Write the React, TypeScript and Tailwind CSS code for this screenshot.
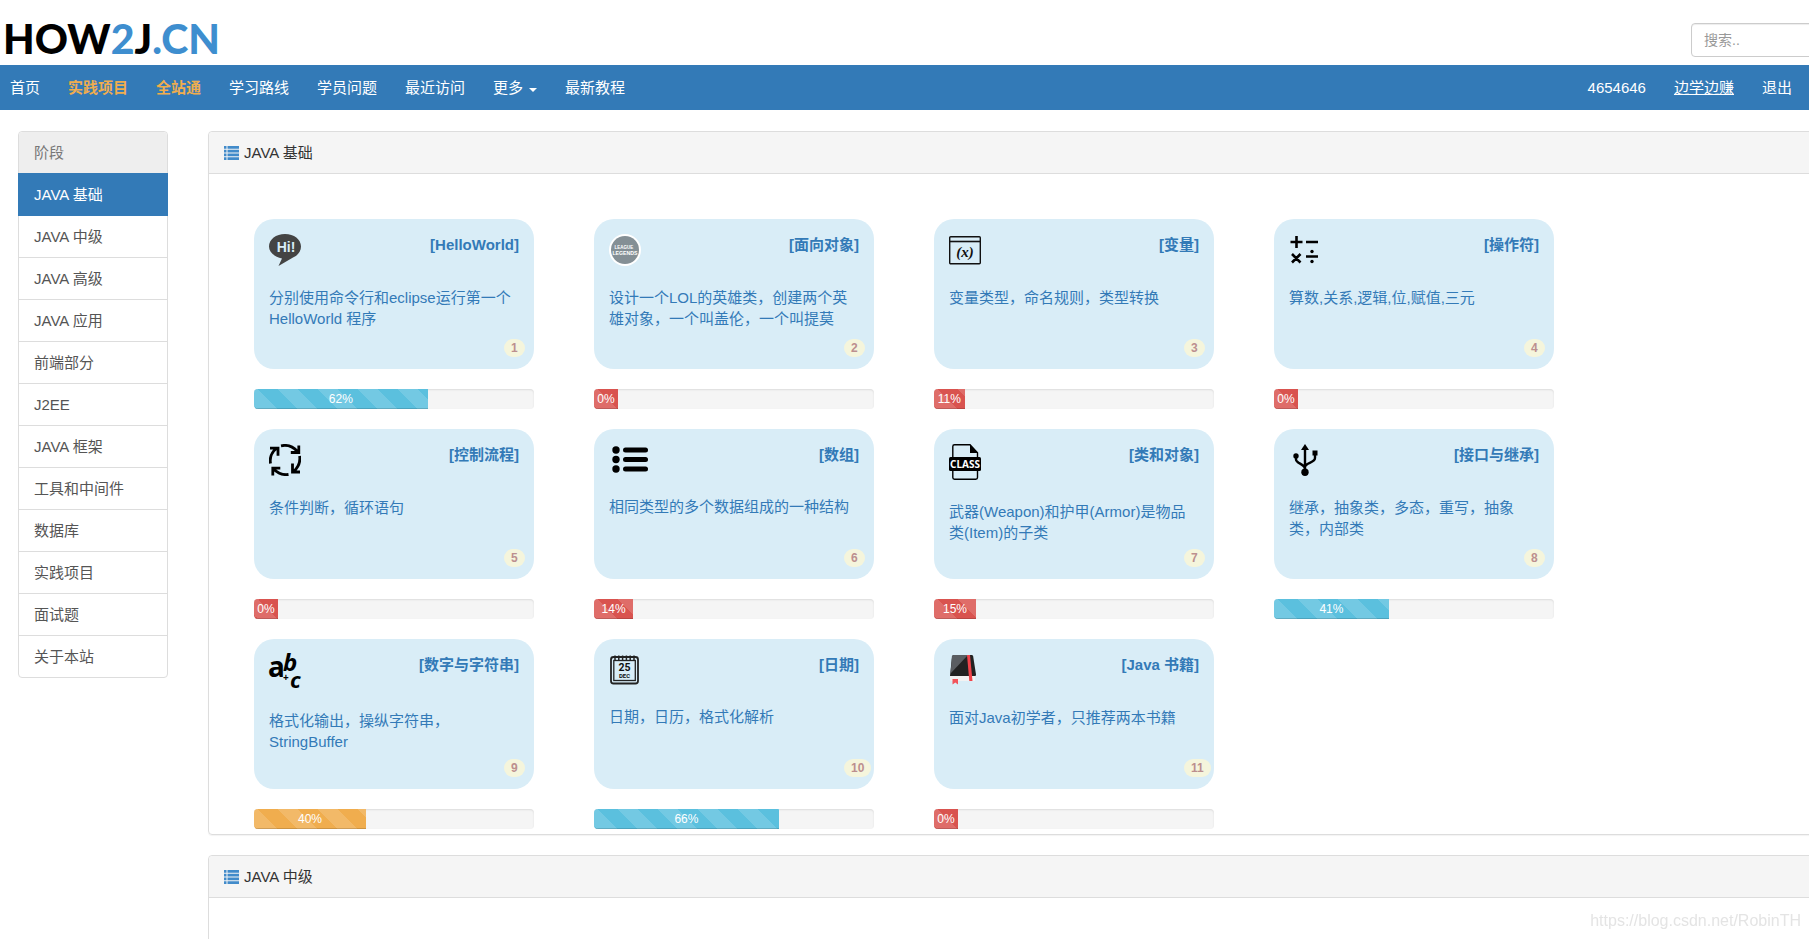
import React, { FormEvent, useState } from "react";

const IconHello = () => (
  <svg width="32" height="32" viewBox="0 0 32 32">
    <path d="M16 0C7 0 0 5.300 0 12.500c0 5.300 5 10.300 13 12L9.500 32 24 23.500c5-2 8-6.200 8-11C32 5.300 25 0 16 0z" fill="#444" />
    <text x="17" y="18" textAnchor="middle" fontSize="14" fontWeight="700" fill="#d9edf7" className="font-['Liberation_Sans',sans-serif]">Hi!</text>
  </svg>
);

const IconLeague = () => (
  <svg width="32" height="32" viewBox="0 0 32 32">
    <circle cx="16" cy="16" r="16" fill="#fff" />
    <circle cx="16" cy="16" r="14" fill="#848f95" />
    <g fill="#fff" textAnchor="middle" fontWeight="700" className="font-['Liberation_Sans',sans-serif]">
      <text x="15" y="15" fontSize="4.500">LEAGUE</text>
      <text x="16" y="20.500" fontSize="5.200">LEGENDS</text>
    </g>
  </svg>
);

const IconVariable = () => (
  <svg width="32" height="32" viewBox="0 0 32 32" fill="none" stroke="#111">
    <rect x="0.700" y="2.700" width="30.600" height="27" rx="1" strokeWidth="1.400" />
    <path d="M1 7.500h30" strokeWidth="1.600" />
    <text x="16" y="22.500" textAnchor="middle" fontSize="15" fontWeight="700" fontStyle="italic" fill="#111" stroke="none" className="font-['Liberation_Serif',serif]">(x)</text>
  </svg>
);

const IconOperators = () => (
  <svg width="32" height="32" viewBox="0 0 32 32" stroke="#000" strokeWidth="2.600" fill="none">
    <path d="M1.500 8h12M7.500 2v12M17 8h12M3 20l8.500 8.500M11.500 20l-8.500 8.500M17 22.500h12" />
    <circle cx="23" cy="17.500" r="1.700" fill="#000" stroke="none" />
    <circle cx="23" cy="27.500" r="1.700" fill="#000" stroke="none" />
  </svg>
);

const IconCycle = () => (
  <svg width="32" height="32" viewBox="0 0 32 32" stroke="#000" strokeWidth="2.800" fill="none">
    <path d="M12 1.800C18 .500 24 2.500 28.500 7.500M29.800 1.500v7h-8" />
    <path d="M30.600 12c1 6-1 11-6 15.500M23.500 19.500v8.500h7.500" />
    <path d="M19.500 30.500c-6 .800-10.500-1-15-5.500M3.800 31.500v-7.300h7.500" />
    <path d="M1.500 19.500C.500 14 3 8 7.500 4.200M1 4.200h8v7.500" />
  </svg>
);

const IconList = () => (
  <svg width="40" height="31" viewBox="0 0 40 31">
    <circle cx="7" cy="6" r="3.700" />
    <circle cx="7" cy="15.500" r="3.700" />
    <circle cx="7" cy="25" r="3.700" />
    <rect x="14" y="3.500" width="25" height="5" rx="2.500" />
    <rect x="14" y="13" width="25" height="5" rx="2.500" />
    <rect x="14" y="22.500" width="25" height="5" rx="2.500" />
  </svg>
);

const IconClass = () => (
  <svg width="32" height="36" viewBox="0 0 32 36">
    <path d="M3.800 14V2.500C3.800 1.500 4.500.800 5.500.800H21l7.500 8V14M3.800 26v7.500c0 1 .700 1.700 1.700 1.700h21.300c1 0 1.700-.700 1.700-1.700V26" fill="none" stroke="#000" strokeWidth="1.400" />
    <path d="M21 .500V9h8z" />
    <rect y="13" width="32" height="14" rx="1.500" />
    <text x="16" y="23.500" textAnchor="middle" fontSize="10" fontWeight="700" fill="#fff" className="font-['Noto_Sans',sans-serif]">CLASS</text>
  </svg>
);

const IconUsb = () => (
  <svg width="32" height="32" viewBox="0 0 32 32">
    <path d="M16 4v25M7 11.500v4c0 4 9 4.500 9 9.500M26 9v5c0 5-10 4.500-10 9" fill="none" stroke="#000" strokeWidth="2.400" />
    <path d="M16 0l4 6h-8z" />
    <circle cx="16" cy="28.300" r="3.700" />
    <circle cx="7" cy="12" r="2.700" />
    <rect x="23.500" y="6.500" width="5" height="5" />
  </svg>
);

const IconAbc = () => (
  <svg width="32" height="35" viewBox="0 0 32 35" overflow="visible" className="font-bold font-['Noto_Sans',sans-serif]">
    <text fontSize="28">
      <tspan x="-1" y="23">a</tspan>
      <tspan x="14" y="17" fontSize="24" fontStyle="italic">b</tspan>
      <tspan x="14" y="27" fontSize="10">+</tspan>
      <tspan x="21" y="34" fontSize="22" fontStyle="italic">c</tspan>
    </text>
  </svg>
);

const IconCalendar = () => (
  <svg width="32" height="31" viewBox="0 0 32 31">
    <rect x="2" y="3" width="27" height="26.500" rx="2.500" fill="none" stroke="#222" strokeWidth="1.800" />
    <rect x="4.800" y="6.500" width="21.500" height="20" fill="none" stroke="#222" strokeWidth="1.300" />
    <path d="M6 1.500v5M9.800 1.500v5M13.600 1.500v5M17.400 1.500v5M21.200 1.500v5M25 1.500v5" stroke="#222" strokeWidth="1.500" />
    <g fill="#111" textAnchor="middle" fontWeight="700" className="font-['Roboto',sans-serif]">
      <text x="15.500" y="17" fontSize="10.500">25</text>
      <text x="15.500" y="24" fontSize="6">DEC</text>
    </g>
  </svg>
);

const IconBook = () => (
  <svg width="32" height="32" viewBox="0 0 32 32">
    <path d="M1 22h25v5H2.500C1.500 27 1 26 1 25z" fill="#f2f2f2" />
    <path d="M5 1h17.500c1 0 1.500.500 1.700 1.500L27 20.500c0 1-.500 1.500-1.500 1.500H1L3 2.500C3.200 1.500 4 1 5 1z" fill="#222" />
    <path d="M5 1h14L1.500 19.500 3 2.500C3.200 1.500 4 1 5 1z" fill="#5a5d61" />
    <path d="M18 1h3l2.500 26h-3.200z" fill="#f0434a" />
    <path d="M3.500 25H9v5.500l-2.700-2-2.800 2z" fill="#f2545b" />
  </svg>
);

const IconRows = () => (
  <svg width="15" height="14" viewBox="0 0 15 14" fill="#428bca">
    <path d="M0 0h2.500v2.700H0zM0 3.800h2.500v2.700H0zM0 7.600h2.500v2.700H0zM0 11.300h2.500V14H0z" />
    <path d="M3.500 0H15v2.700H3.500zM3.500 3.800H15v2.700H3.500zM3.500 7.600H15v2.700H3.500zM3.500 11.300H15V14H3.500z" />
  </svg>
);

const leftNav = [
  { label: "首页" },
  { label: "实践项目", hot: true },
  { label: "全站通", hot: true },
  { label: "学习路线" },
  { label: "学员问题" },
  { label: "最近访问" },
  { label: "更多", caret: true },
  { label: "最新教程" },
];

const stages = [
  "JAVA 基础",
  "JAVA 中级",
  "JAVA 高级",
  "JAVA 应用",
  "前端部分",
  "J2EE",
  "JAVA 框架",
  "工具和中间件",
  "数据库",
  "实践项目",
  "面试题",
  "关于本站",
];

const lessons = [
  { title: "HelloWorld", desc: "分别使用命令行和eclipse运行第一个HelloWorld 程序", percent: 62, icon: <IconHello /> },
  { title: "面向对象", desc: "设计一个LOL的英雄类，创建两个英雄对象，一个叫盖伦，一个叫提莫", percent: 0, icon: <IconLeague /> },
  { title: "变量", desc: "变量类型，命名规则，类型转换", percent: 11, icon: <IconVariable /> },
  { title: "操作符", desc: "算数,关系,逻辑,位,赋值,三元", percent: 0, icon: <IconOperators /> },
  { title: "控制流程", desc: "条件判断，循环语句", percent: 0, icon: <IconCycle /> },
  { title: "数组", desc: "相同类型的多个数据组成的一种结构", percent: 14, icon: <IconList /> },
  { title: "类和对象", desc: "武器(Weapon)和护甲(Armor)是物品类(Item)的子类", percent: 15, icon: <IconClass /> },
  { title: "接口与继承", desc: "继承，抽象类，多态，重写，抽象类，内部类", percent: 41, icon: <IconUsb /> },
  { title: "数字与字符串", desc: "格式化输出，操纵字符串，StringBuffer", percent: 40, icon: <IconAbc /> },
  { title: "日期", desc: "日期，日历，格式化解析", percent: 66, icon: <IconCalendar /> },
  { title: "Java 书籍", desc: "面对Java初学者，只推荐两本书籍", percent: 0, icon: <IconBook /> },
];

// red below 20, orange up to 40, blue above
const barColor = (percent: number) => {
  if (percent < 20) return "bg-[#d9534f]";
  if (percent <= 40) return "bg-[#f0ad4e]";
  return "bg-[#5bc0de]";
};

const PanelHeading = ({ title }: { title: string }) => (
  <h2 className="flex items-center gap-[5px] h-[42px] px-[15px] bg-[#f5f5f5] border-b border-[#ddd] rounded-tl text-[#333]">
    <IconRows />
    {title}
  </h2>
);

const App = () => {
  const [keyword, setKeyword] = useState("");
  const [stage, setStage] = useState(stages[0]);

  const search = (e: FormEvent<HTMLFormElement>) => {
    e.preventDefault();
  };

  return (
    <div className="min-h-screen overflow-hidden bg-white text-[15px] leading-[21px] text-[#333] font-['Liberation_Sans','Noto_Sans_CJK_SC',sans-serif]">
      {/* Logo and search */}
      <header className="flex justify-between h-[65px]">
        <a href="#" className="flex items-center pt-3 pl-[3px] text-[41px] leading-none font-black text-black font-['Lato',sans-serif]">
          HOW<span className="text-[#3e8ecf]">2</span>J<span className="text-[#3e8ecf]">.CN</span>
        </a>
        <form onSubmit={search} className="pt-[23px] -mr-[82px]">
          <input
            type="text"
            aria-label="搜索"
            value={keyword}
            onChange={(e) => setKeyword(e.target.value)}
            placeholder="搜索.."
            className="w-[200px] h-[34px] px-3 text-sm border border-[#ccc] rounded placeholder:text-[#999] shadow-[inset_0_1px_1px_rgba(0,0,0,0.075)]"
          />
        </form>
      </header>

      <nav className="flex justify-between items-center h-[45px] pl-[10px] pr-[17px] bg-[#337ab7] text-white">
        <div className="flex gap-7">
          {leftNav.map((item) => (
            <a key={item.label} href="#" className={item.hot ? "font-bold text-[#f0ad4e]" : "flex items-center gap-[6px]"}>
              {item.label}
              {item.caret && <span className="mt-1 border-x-4 border-x-transparent border-t-4 border-t-white" />}
            </a>
          ))}
        </div>
        <div className="flex gap-7">
          <a href="#">4654646</a>
          <a href="#" className="underline">边学边赚</a>
          <a href="#">退出</a>
        </div>
      </nav>

      <div className="flex items-start gap-10 pt-[21px] pl-[18px]">
        {/* Stage list */}
        <aside className="w-[150px] shrink-0 border border-[#ddd] rounded">
          <div className="h-[41px] px-[15px] py-[10px] bg-[#eee] rounded-t text-[#777]">阶段</div>
          {stages.map((name) => (
            <a
              key={name}
              href="#"
              onClick={() => setStage(name)}
              className={
                name === stage
                  ? "relative block h-[43px] -mx-px -mb-px px-4 py-[11px] bg-[#337ab7] text-white"
                  : "block h-[42px] px-[15px] py-[10px] border-t border-[#ddd] text-[#555]"
              }
            >
              {name}
            </a>
          ))}
        </aside>

        <main className="flex-1 min-w-0 -mr-2">
          <section className="mb-5 border border-[#ddd] rounded shadow-[0_1px_1px_rgba(0,0,0,0.05)]">
            <PanelHeading title="JAVA 基础" />
            <div className="flex flex-wrap gap-x-[60px] gap-y-5 pt-[45px] pl-[45px] pr-[200px] pb-[5px]">
              {lessons.map((item, index) => (
                <div key={item.title} className="w-[280px]">
                  <a href="#" className="relative block h-[150px] p-[15px] mb-5 bg-[#d9edf7] rounded-[20px] text-[#337ab7]">
                    <div className="flex justify-between items-start mb-[21px]">
                      {item.icon}
                      <b>[{item.title}]</b>
                    </div>
                    <p>{item.desc}</p>
                    <span className="absolute left-[250px] top-[120px] px-[7px] py-[3px] rounded-[10px] bg-[#f5f5dc] text-xs leading-3 font-bold text-[#bc8f8f]">
                      {index + 1}
                    </span>
                  </a>
                  <div className="h-5 overflow-hidden bg-[#f5f5f5] rounded shadow-[inset_0_1px_2px_rgba(0,0,0,0.1)]">
                    <div
                      className={`h-full min-w-6 text-center text-xs leading-5 text-white shadow-[inset_0_-1px_0_rgba(0,0,0,0.15)] bg-[linear-gradient(45deg,rgba(255,255,255,0.15)_25%,transparent_25%,transparent_50%,rgba(255,255,255,0.15)_50%,rgba(255,255,255,0.15)_75%,transparent_75%)] bg-[length:40px_40px] bg-[position:-16px_0] ${barColor(item.percent)}`}
                      style={{ width: `${item.percent}%` }}
                    >
                      {item.percent}%
                    </div>
                  </div>
                </div>
              ))}
            </div>
          </section>

          <section className="h-[200px] -mb-[116px] border border-[#ddd] rounded">
            <PanelHeading title="JAVA 中级" />
          </section>
        </main>
      </div>

      <div className="fixed right-2 bottom-[6px] text-base text-[#e4e4e4]">https://blog.csdn.net/RobinTH</div>
    </div>
  );
};

export default App;
